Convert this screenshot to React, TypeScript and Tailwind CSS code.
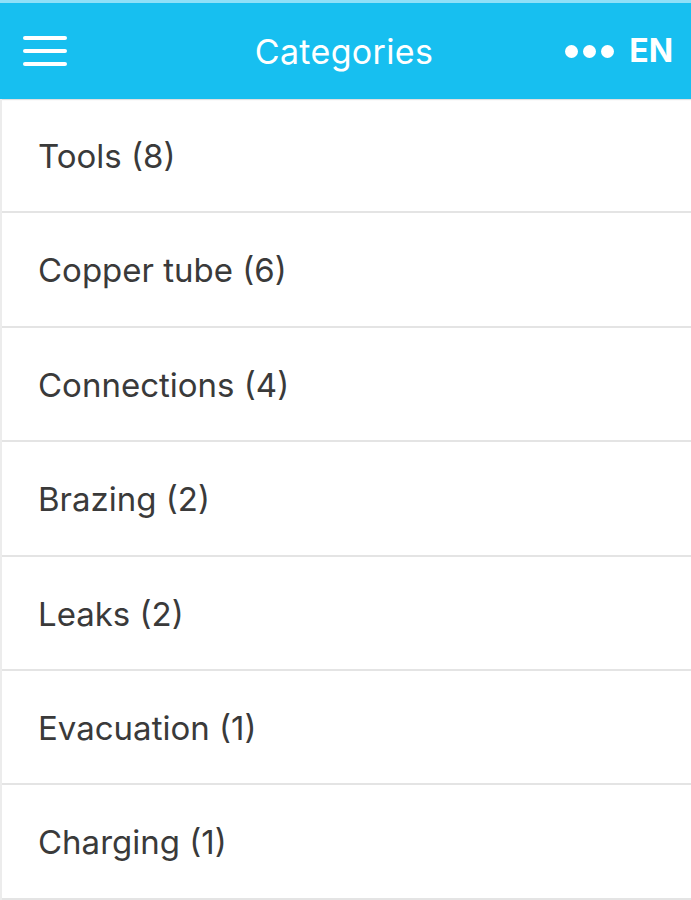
const categories = [
  { name: "Tools", count: 8 },
  { name: "Copper tube", count: 6 },
  { name: "Connections", count: 4 },
  { name: "Brazing", count: 2 },
  { name: "Leaks", count: 2 },
  { name: "Evacuation", count: 1 },
  { name: "Charging", count: 1 },
];

const App = () => {
  return (
    <main className="w-[691px] h-[900px] bg-white overflow-hidden font-['Inter',sans-serif]">
      <header className="h-[99px] border-t-[3px] border-[#8fe0f8] bg-[#17bff0] flex items-center pl-[23px] pr-[18px] shadow-[0_1px_1px_rgba(0,0,0,0.12)]">
        <div className="flex-1 flex">
          <div className="flex flex-col gap-[9px] w-[44px]">
            <span className="h-[4px] bg-white rounded-sm" />
            <span className="h-[4px] bg-white rounded-sm" />
            <span className="h-[4px] bg-white rounded-sm" />
          </div>
        </div>
        <h1 className="text-white text-[34px] tracking-[0.01em] -ml-[8px]">Categories</h1>
        <div className="flex-1 flex items-center justify-end gap-[15px]">
          <div className="flex items-center gap-[5px]">
            <span className="w-[13px] h-[13px] rounded-full bg-white" />
            <span className="w-[13px] h-[13px] rounded-full bg-white" />
            <span className="w-[13px] h-[13px] rounded-full bg-white" />
          </div>
          <span className="text-white text-[32px] font-bold">EN</span>
        </div>
      </header>
      <ul className="border-l-2 border-[#ececec]">
        {categories.map((c) => (
          <li
            key={c.name}
            className="h-[114.4px] border-b-2 border-[#e4e4e4] flex items-center pl-[36px] pt-[3px] text-[33px] text-[#3a3a3a]"
          >
            {c.name} ({c.count})
          </li>
        ))}
      </ul>
    </main>
  );
};

export default App;
